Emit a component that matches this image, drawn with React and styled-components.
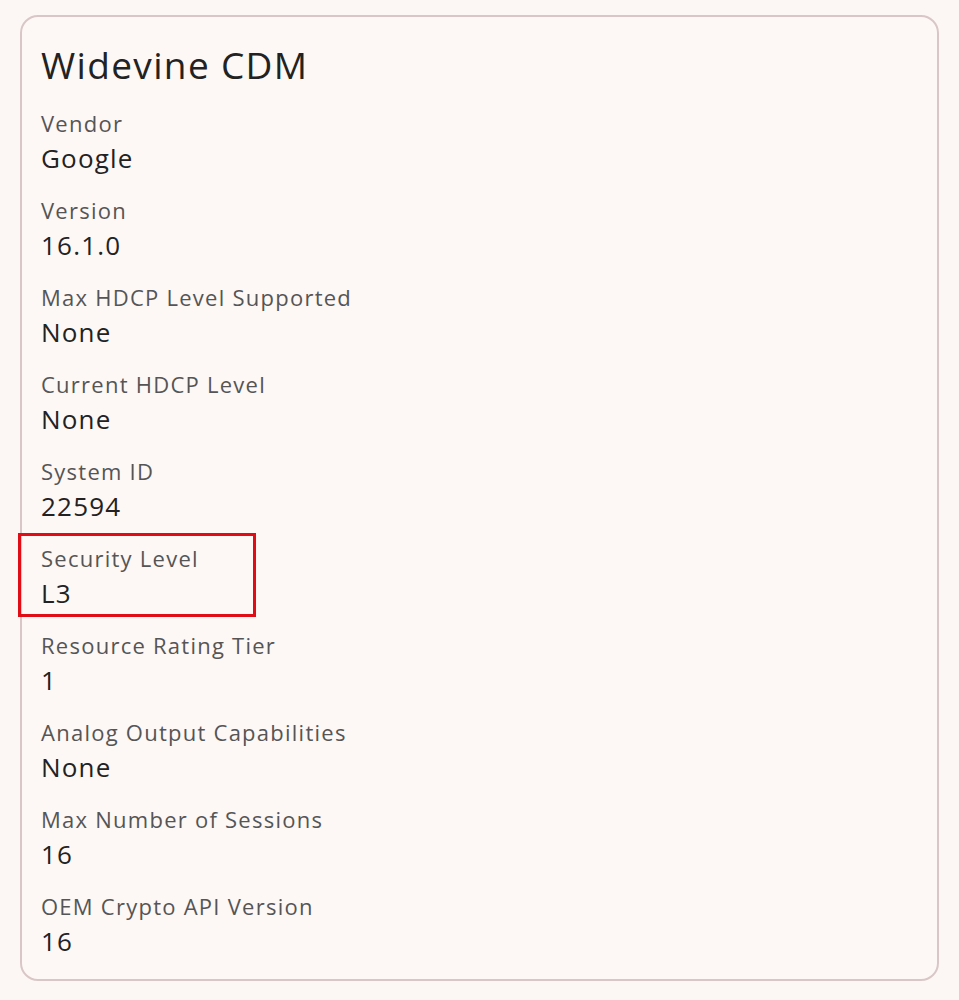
import styled, { createGlobalStyle } from "styled-components";

const GlobalStyle = createGlobalStyle`
  html, body {
    margin: 0;
    padding: 0;
    background: #fcf7f5;
  }
  body {
    font-family: "Open Sans", "Noto Sans", sans-serif;
  }
`;

const Page = styled.div`
  padding: 15px 20px 19px 20px;
`;

const Card = styled.section`
  border: 2px solid #d9c7c6;
  border-radius: 18px;
  background: #fdf8f6;
  padding: 24px 19px 19px 19px;
  display: flex;
  flex-direction: column;
`;

const Title = styled.h1`
  margin: 0 0 18px 0;
  font-size: 37px;
  line-height: 48px;
  font-weight: 400;
  color: #222;
  letter-spacing: 1.35px;
`;

const List = styled.div`
  display: flex;
  flex-direction: column;
  gap: 17px;
`;

const Item = styled.div`
  position: relative;
  display: flex;
  flex-direction: column;

  ${(p) =>
    p.$highlight &&
    `
    &::after {
      content: "";
      position: absolute;
      left: -23px;
      top: -9px;
      width: 238px;
      height: 84px;
      box-sizing: border-box;
      border: 3px solid #e00d16;
      pointer-events: none;
    }
  `}
`;

const Label = styled.div`
  font-size: 22px;
  line-height: 32px;
  color: #555;
  letter-spacing: 1.25px;
`;

const Value = styled.div`
  font-size: 26px;
  line-height: 38px;
  color: #222;
  letter-spacing: 1.2px;
`;

const rows = [
  { label: "Vendor", value: "Google" },
  { label: "Version", value: "16.1.0" },
  { label: "Max HDCP Level Supported", value: "None" },
  { label: "Current HDCP Level", value: "None" },
  { label: "System ID", value: "22594" },
  { label: "Security Level", value: "L3", highlight: true },
  { label: "Resource Rating Tier", value: "1" },
  { label: "Analog Output Capabilities", value: "None" },
  { label: "Max Number of Sessions", value: "16" },
  { label: "OEM Crypto API Version", value: "16" },
];

export default function App() {
  return (
    <>
      <GlobalStyle />
      <Page>
        <Card>
          <Title>Widevine CDM</Title>
          <List>
            {rows.map((row) => (
              <Item key={row.label} $highlight={row.highlight}>
                <Label>{row.label}</Label>
                <Value>{row.value}</Value>
              </Item>
            ))}
          </List>
        </Card>
      </Page>
    </>
  );
}
